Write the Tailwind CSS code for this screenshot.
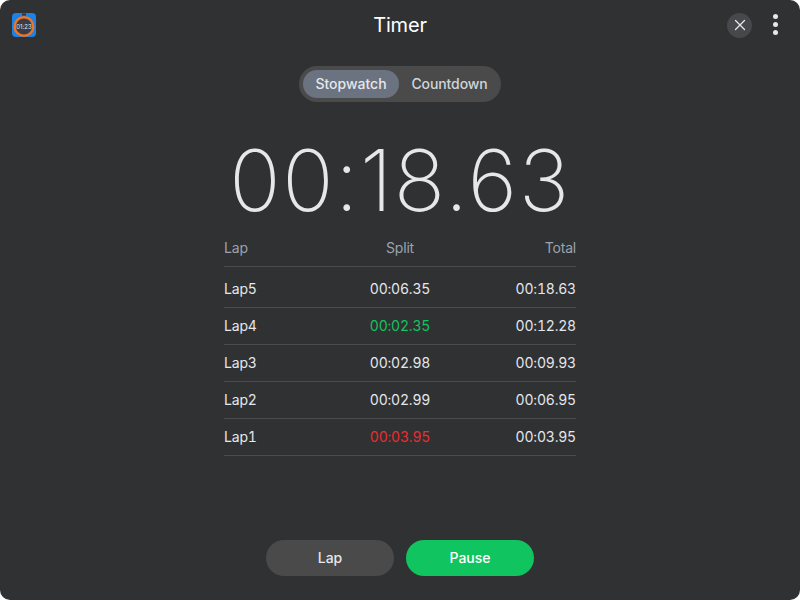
<!DOCTYPE html>
<html>
  <head>
    <title>Timer</title>
    <meta charset="UTF-8" />
    <script src="https://cdn.jsdelivr.net/npm/@tailwindcss/browser@4"></script>
  </head>
  <body class="bg-white font-['Inter',sans-serif]">
    <div class="flex flex-col w-[800px] h-[600px] overflow-hidden rounded-[10px] bg-[#303133] text-[#e5e7eb]">
      <header class="flex items-center h-[50px] shrink-0 pl-3 pr-[22px]">
        <svg class="w-6 h-6 shrink-0" viewBox="0 0 24 24">
          <rect width="24" height="24" rx="4" fill="#1b82e6" />
          <rect x="10" y="0.5" width="4" height="2" fill="#2b3340" />
          <circle cx="12" cy="13.5" r="9.3" fill="#3a3d42" stroke="#f07426" stroke-width="2.4" />
          <text x="12" y="15.5" font-size="6" text-anchor="middle" fill="#e5e7eb" font-family="Inter">01:23</text>
        </svg>
        <h1 class="flex-1 text-center text-xl leading-7 tracking-[-0.2px] text-white pl-[37px]">Timer</h1>
        <button class="flex items-center justify-center w-[25px] h-[25px] rounded-full bg-[#47484b]">
          <svg class="w-3 h-3" viewBox="0 0 12 12" fill="none" stroke="#e5e7eb" stroke-width="1.3" stroke-linecap="round">
            <path d="M1.5 1.5 L10.5 10.5 M10.5 1.5 L1.5 10.5" />
          </svg>
        </button>
        <div class="flex flex-col gap-[3px] ml-[21px] -mt-[2px]">
          <span class="w-[5px] h-[5px] rounded-full bg-[#e5e7eb]"></span>
          <span class="w-[5px] h-[5px] rounded-full bg-[#e5e7eb]"></span>
          <span class="w-[5px] h-[5px] rounded-full bg-[#e5e7eb]"></span>
        </div>
      </header>

      <div class="flex justify-center mt-4">
        <div class="flex items-center h-9 p-1 rounded-full bg-[#4a4a4a] text-sm font-medium">
          <button class="w-24 h-7 rounded-full bg-[#6b7280] text-[#e5e7eb]">Stopwatch</button>
          <button class="w-[98px] h-7 pl-[3px] rounded-full tracking-[-0.1px] text-[#d1d5db]">Countdown</button>
        </div>
      </div>

      <div class="mt-6 h-[110px] text-center text-[85px] leading-[110px] font-[250] tracking-[1.5px] text-[#e5e7eb]">00:18.63</div>

      <div class="w-[352px] mx-auto mt-[2px] text-sm tabular-nums tracking-[-0.2px]">
        <div class="grid grid-cols-3 h-[29px] pb-2 items-center border-b border-[#4b4c4f] text-[#9ca3af]">
          <span>Lap</span><span class="text-center">Split</span><span class="text-right">Total</span>
        </div>
        <div class="grid grid-cols-3 h-[41px] pt-1 items-center border-b border-[#4b4c4f]">
          <span>Lap5</span><span class="text-center">00:06.35</span><span class="text-right">00:18.63</span>
        </div>
        <div class="grid grid-cols-3 h-[37px] items-center border-b border-[#4b4c4f]">
          <span>Lap4</span><span class="text-center text-[#10c45f]">00:02.35</span><span class="text-right">00:12.28</span>
        </div>
        <div class="grid grid-cols-3 h-[37px] items-center border-b border-[#4b4c4f]">
          <span>Lap3</span><span class="text-center">00:02.98</span><span class="text-right">00:09.93</span>
        </div>
        <div class="grid grid-cols-3 h-[37px] items-center border-b border-[#4b4c4f]">
          <span>Lap2</span><span class="text-center">00:02.99</span><span class="text-right">00:06.95</span>
        </div>
        <div class="grid grid-cols-3 h-[37px] items-center border-b border-[#4b4c4f]">
          <span>Lap1</span><span class="text-center text-[#ef2b2b]">00:03.95</span><span class="text-right">00:03.95</span>
        </div>
      </div>

      <div class="flex justify-center gap-3 mt-auto mb-6 text-sm font-medium">
        <button class="w-32 h-9 rounded-full bg-[#4a4a4a] text-[#e5e7eb]">Lap</button>
        <button class="w-32 h-9 rounded-full bg-[#10c45f] text-white">Pause</button>
      </div>
    </div>
  </body>
</html>
